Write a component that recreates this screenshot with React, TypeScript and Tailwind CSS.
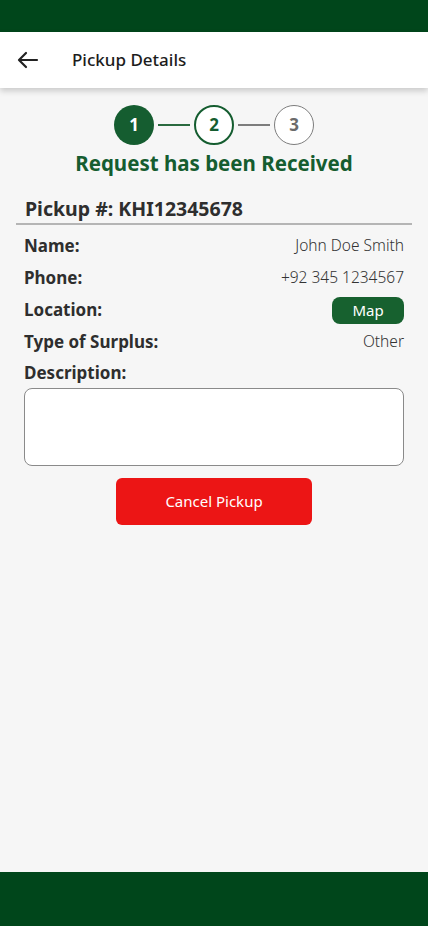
import React from "react";

export default function App() {
  const font = { fontFamily: '"Noto Sans", "Open Sans", sans-serif' };
  const rows: [string, string][] = [
    ["Name:", "John Doe Smith"],
    ["Phone:", "+92 345 1234567"],
  ];
  return (
    <div className="w-[428px] h-[926px] bg-[#f6f6f6] flex flex-col" style={font}>
      <div className="h-[32px] bg-[#00461b] shrink-0" />
      <div className="h-[56px] bg-white flex items-center shrink-0 shadow-[0_3px_6px_rgba(0,0,0,0.18)] relative z-10">
        <svg width="24" height="24" viewBox="0 0 24 24" className="ml-[16px]" fill="none" stroke="#222" strokeWidth="2.2" strokeLinecap="round" strokeLinejoin="round">
          <path d="M21 12H3.5M10 5l-7 7 7 7" />
        </svg>
        <span className="ml-[32px] text-[17px] font-medium text-[#1c1c1c]">Pickup Details</span>
      </div>
      <div className="flex-1 flex flex-col">
        <div className="flex items-center justify-center mt-[17px]">
          <div className="w-[40px] h-[40px] rounded-full bg-[#155d30] text-white flex items-center justify-center text-[17px] font-bold">1</div>
          <div className="w-[32px] h-[2px] bg-[#2a6a3f] mx-[4px]" />
          <div className="w-[40px] h-[40px] rounded-full border-2 border-[#155d30] bg-white text-[#155d30] flex items-center justify-center text-[17px] font-bold">2</div>
          <div className="w-[32px] h-[2px] bg-[#7d7d7d] mx-[4px]" />
          <div className="w-[40px] h-[40px] rounded-full border border-[#7d7d7d] bg-white text-[#6b6b6b] flex items-center justify-center text-[17px] font-bold">3</div>
        </div>
        <div className="text-center text-[20.5px] font-bold text-[#155d30] mt-[3px] leading-[30px]">Request has been Received</div>
        <div className="mx-[16px] mt-[17px] border-b-2 border-[#b5b5b5] px-[9px]">
          <span className="text-[19.5px] font-bold text-[#2e2e2e] leading-[28px]">Pickup #: KHI12345678</span>
        </div>
        <div className="px-[24px] mt-[5px] flex flex-col">
          {rows.map(([l, v]) => (
            <div key={l} className="flex items-center justify-between h-[32px]">
              <span className="text-[17px] font-bold text-[#2e2e2e]">{l}</span>
              <span className="text-[15.5px] font-light text-[#333]">{v}</span>
            </div>
          ))}
          <div className="flex items-center justify-between h-[32px]">
            <span className="text-[17px] font-bold text-[#2e2e2e]">Location:</span>
            <button className="w-[72px] h-[27px] rounded-[8px] bg-[#17612f] text-white text-[15px] flex items-center justify-center">Map</button>
          </div>
          <div className="flex items-center justify-between h-[32px]">
            <span className="text-[17px] font-bold text-[#2e2e2e]">Type of Surplus:</span>
            <span className="text-[15.5px] font-light text-[#333]">Other</span>
          </div>
          <div className="flex items-center h-[30px]">
            <span className="text-[17px] font-bold text-[#2e2e2e]">Description:</span>
          </div>
          <div className="h-[78px] bg-white border border-[#8a8a8a] rounded-[8px]" />
          <div className="flex justify-center mt-[12px]">
            <button className="w-[196px] h-[47px] rounded-[6px] bg-[#ec1515] text-white text-[15px]">Cancel Pickup</button>
          </div>
        </div>
      </div>
      <div className="h-[54px] bg-[#00461b] shrink-0" />
    </div>
  );
}
